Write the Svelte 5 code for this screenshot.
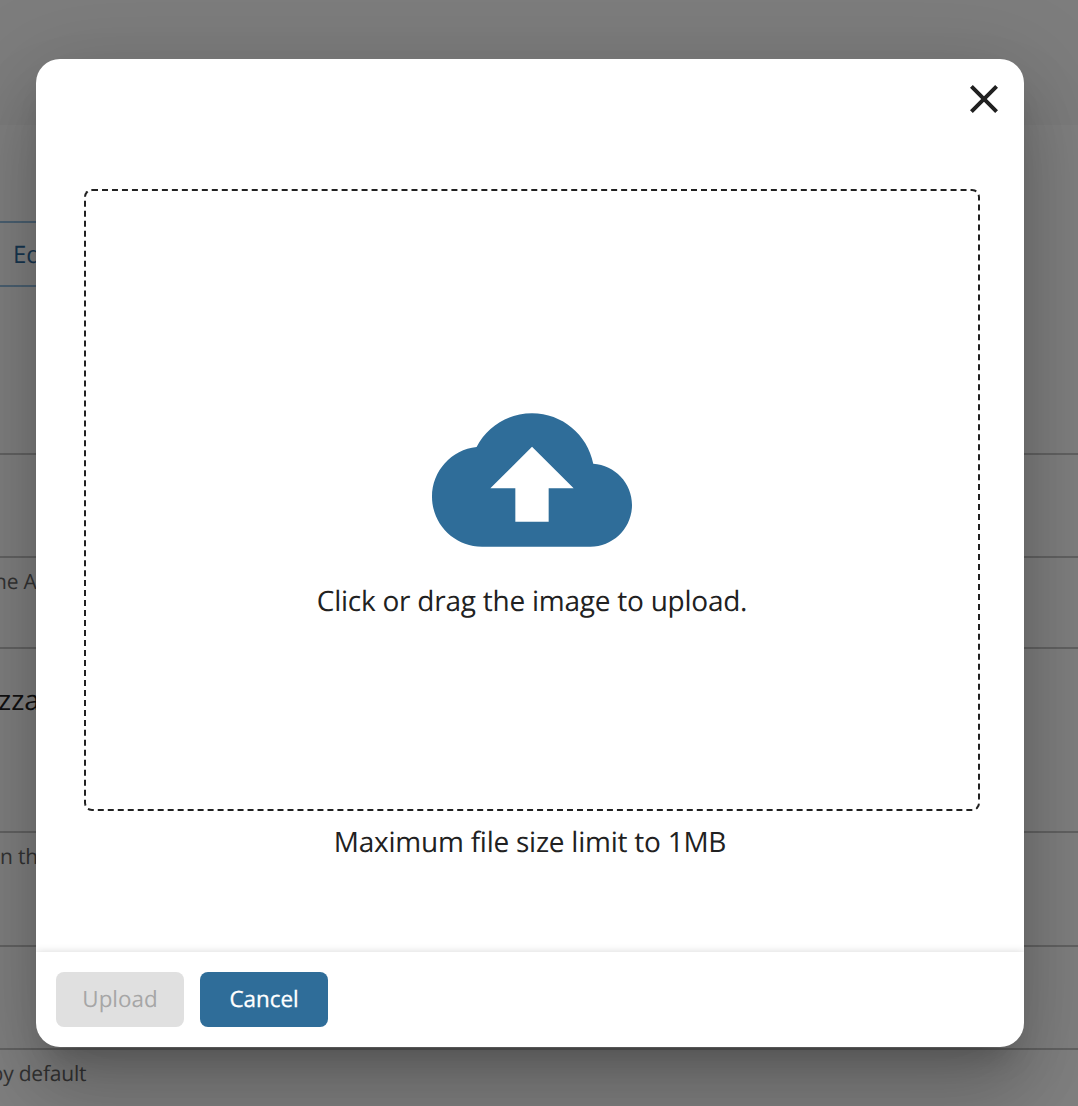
<script>
  const uploadDisabled = true;
</script>

<div class="page">
  <main class="settings">
    <header class="topbar"></header>
    <section class="toolbar">
      <button class="edit">Ed</button>
    </section>
    <section class="row r1"></section>
    <section class="row r2"><p class="hint h1">he A</p></section>
    <section class="row r3"><p class="value">zza</p></section>
    <section class="row r4"><p class="hint h2">n th</p></section>
    <section class="row r5"></section>
    <section class="row r6"><p class="hint h3">by default</p></section>
  </main>

  <div class="overlay">
    <div class="dialog" role="dialog" aria-label="Upload image">
      <div class="head">
        <button class="close" aria-label="Close">
          <svg viewBox="0 0 24 24"><path d="M19 6.41 17.59 5 12 10.59 6.41 5 5 6.41 10.59 12 5 17.59 6.41 19 12 13.41 17.59 19 19 17.59 13.41 12z" /></svg>
        </button>
      </div>
      <div class="body">
        <div class="drop">
          <svg class="cloud" viewBox="0 0 24 24"><path d="M19.35 10.04C18.67 6.59 15.64 4 12 4 9.11 4 6.6 5.64 5.35 8.04 2.34 8.36 0 10.91 0 14c0 3.31 2.69 6 6 6h13c2.76 0 5-2.24 5-5 0-2.64-2.05-4.78-4.65-4.96zM14 13v4h-4v-4H7l5-5 5 5h-3z" /></svg>
          <p>Click or drag the image to upload.</p>
        </div>
        <p class="limit">Maximum file size limit to 1MB</p>
      </div>
      <footer>
        <button class="btn" disabled={uploadDisabled}>Upload</button>
        <button class="btn primary">Cancel</button>
      </footer>
    </div>
  </div>
</div>

<style>
  :global(body) { background: #808080; overflow: hidden; }
  * { box-sizing: border-box; }
  p { margin: 0; white-space: nowrap; }
  button { font: inherit; border: 0; margin: 0; padding: 0; text-rendering: inherit; }
  .page {
    position: relative;
    width: 1078px;
    height: 1106px;
    overflow: hidden;
    font-family: "Open Sans", "Noto Sans", sans-serif;
    color: #212121;
    text-rendering: geometricPrecision;
  }
  .settings { display: flex; flex-direction: column; height: 100%; background: #808080; }
  .topbar { height: 125px; background: #7d7d7d; flex: none; }
  .toolbar { height: 328px; padding-top: 96px; flex: none; }
  .edit {
    display: block;
    width: 90px;
    height: 66px;
    padding: 0 0 0 13px;
    text-align: left;
    background: none;
    border: 2px solid #4b6071;
    border-left: 0;
    color: #173650;
    font-size: 24px;
  }
  .row { border-top: 2px solid #636363; flex: none; overflow: hidden; }
  .r1 { height: 103px; }
  .r2 { height: 91px; padding-top: 10px; }
  .r3 { height: 184px; padding-top: 32px; }
  .r4 { height: 114px; padding-top: 10px; }
  .r5 { height: 103px; }
  .r6 { height: 58px; padding-top: 10px; }
  .hint { font-size: 21px; line-height: 28px; color: #333; letter-spacing: -0.2px; }
  .h1 { margin-left: -6px; }
  .h2 { margin-left: 0; }
  .h3 { margin-left: -9.5px; }
  .value { font-size: 28px; line-height: 38px; color: #111; margin-left: -2px; }
  .overlay {
    position: absolute;
    inset: 0;
    padding: 59px 54px 59px 36px;
    display: flex;
  }
  .dialog {
    flex: 1;
    display: flex;
    flex-direction: column;
    background: #fff;
    border-radius: 24px;
    overflow: hidden;
    box-shadow: 0 22px 30px -14px rgba(0, 0, 0, 0.2), 0 48px 76px 6px rgba(0, 0, 0, 0.14),
      0 18px 92px 16px rgba(0, 0, 0, 0.12);
  }
  .head { display: flex; justify-content: flex-end; height: 130px; padding: 16px 16px 0 0; }
  .close { width: 48px; height: 48px; background: none; }
  .close svg { display: block; width: 48px; height: 48px; fill: #212121; }
  .body { flex: 1; padding: 0 44px 0 48px; }
  .drop {
    height: 622px;
    display: flex;
    flex-direction: column;
    align-items: center;
    padding-top: 189px;
    border: 2px dashed #212121;
    border-radius: 8px;
    font-size: 28px;
    line-height: 42px;
    letter-spacing: -0.24px;
  }
  .cloud { width: 200px; height: 200px; fill: #2f6d99; flex: none; }
  .limit {
    margin: 10px 4px 0 0;
    text-align: center;
    font-size: 28px;
    line-height: 42px;
    letter-spacing: -0.24px;
  }
  footer {
    display: flex;
    gap: 16px;
    height: 95px;
    padding: 20px;
    box-shadow: 0 0 8px rgba(0, 0, 0, 0.16);
  }
  .btn {
    width: 128px;
    height: 55px;
    padding-bottom: 3px;
    border-radius: 8px;
    font-size: 22.4px;
    background: #2f6d99;
    color: #fff;
  }
  .btn:disabled { background: #e0e0e0; color: #a6a6a6; }
  .primary { -webkit-text-stroke: 0.3px #fff; }
</style>
